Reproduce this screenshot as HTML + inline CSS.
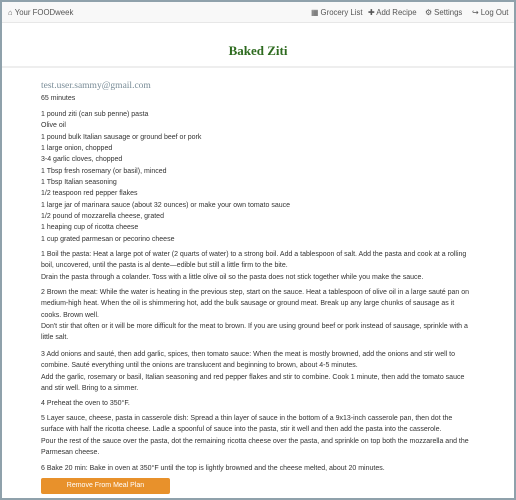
<!DOCTYPE html>
<html><head><style>
html,body{margin:0;padding:0}
body{width:516px;height:500px;box-sizing:border-box;border:2px solid #8fa1ab;background:#fff;font-family:"Liberation Sans",sans-serif;color:#333;overflow:hidden;position:relative}
.nav{position:absolute;left:0;top:0;width:512px;height:20px;background:#f8f8f8;border-bottom:1px solid #e7e7e7;font-size:7.8px;color:#555}
.nav span{position:absolute;top:6px;white-space:nowrap}
.hdr{position:absolute;left:0;top:21px;width:512px;height:43px;border-bottom:2px solid #eee}
h1{position:absolute;left:0;width:512px;top:41px;margin:0;text-align:center;font-family:"Liberation Serif",serif;font-weight:bold;font-size:13px;color:#2e6b1f}
.email{position:absolute;left:39px;top:79px;font-family:"Liberation Serif",serif;font-size:9.5px;color:#7a8d98}
.t{position:absolute;left:39px;font-size:7px;line-height:11.3px;white-space:nowrap;color:#333}
.btn{position:absolute;left:39px;top:476px;width:129px;height:16px;background:#e8912b;border-radius:2px;color:#fff;font-size:7px;text-align:center;line-height:16px}
.btn span{display:block;line-height:16px;height:16px}
</style></head><body>
<div class="nav">
<span style="left:6px">&#8962; Your FOODweek</span>
<span style="left:309px">&#9638; Grocery List</span>
<span style="left:366px">&#10010; Add Recipe</span>
<span style="left:423px">&#9881; Settings</span>
<span style="left:470px">&#8618; Log Out</span>
</div>
<div class="hdr"></div>
<h1>Baked Ziti</h1>
<div class="email">test.user.sammy@gmail.com</div>
<div class="t" style="top:91px">65 minutes</div>
<div class="t" style="top:107px;line-height:11.35px">1 pound ziti (can sub penne) pasta<br>Olive oil<br>1 pound bulk Italian sausage or ground beef or pork<br>1 large onion, chopped<br>3-4 garlic cloves, chopped<br>1 Tbsp fresh rosemary (or basil), minced<br>1 Tbsp Italian seasoning<br>1/2 teaspoon red pepper flakes<br>1 large jar of marinara sauce (about 32 ounces) or make your own tomato sauce<br>1/2 pound of mozzarella cheese, grated<br>1 heaping cup of ricotta cheese<br>1 cup grated parmesan or pecorino cheese</div>
<div class="t" style="top:247px">1 Boil the pasta: Heat a large pot of water (2 quarts of water) to a strong boil. Add a tablespoon of salt. Add the pasta and cook at a rolling<br>boil, uncovered, until the pasta is al dente—edible but still a little firm to the bite.<br>Drain the pasta through a colander. Toss with a little olive oil so the pasta does not stick together while you make the sauce.</div>
<div class="t" style="top:285px">2 Brown the meat: While the water is heating in the previous step, start on the sauce. Heat a tablespoon of olive oil in a large sauté pan on<br>medium-high heat. When the oil is shimmering hot, add the bulk sausage or ground meat. Break up any large chunks of sausage as it<br>cooks. Brown well.<br>Don't stir that often or it will be more difficult for the meat to brown. If you are using ground beef or pork instead of sausage, sprinkle with a<br>little salt.</div>
<div class="t" style="top:347px">3 Add onions and sauté, then add garlic, spices, then tomato sauce: When the meat is mostly browned, add the onions and stir well to<br>combine. Sauté everything until the onions are translucent and beginning to brown, about 4-5 minutes.<br>Add the garlic, rosemary or basil, Italian seasoning and red pepper flakes and stir to combine. Cook 1 minute, then add the tomato sauce<br>and stir well. Bring to a simmer.</div>
<div class="t" style="top:396px">4 Preheat the oven to 350°F.</div>
<div class="t" style="top:411px">5 Layer sauce, cheese, pasta in casserole dish: Spread a thin layer of sauce in the bottom of a 9x13-inch casserole pan, then dot the<br>surface with half the ricotta cheese. Ladle a spoonful of sauce into the pasta, stir it well and then add the pasta into the casserole.<br>Pour the rest of the sauce over the pasta, dot the remaining ricotta cheese over the pasta, and sprinkle on top both the mozzarella and the<br>Parmesan cheese.</div>
<div class="t" style="top:461px">6 Bake 20 min: Bake in oven at 350°F until the top is lightly browned and the cheese melted, about 20 minutes.</div>
<div class="btn"><span>Remove From Meal Plan</span></div>
</body></html>
